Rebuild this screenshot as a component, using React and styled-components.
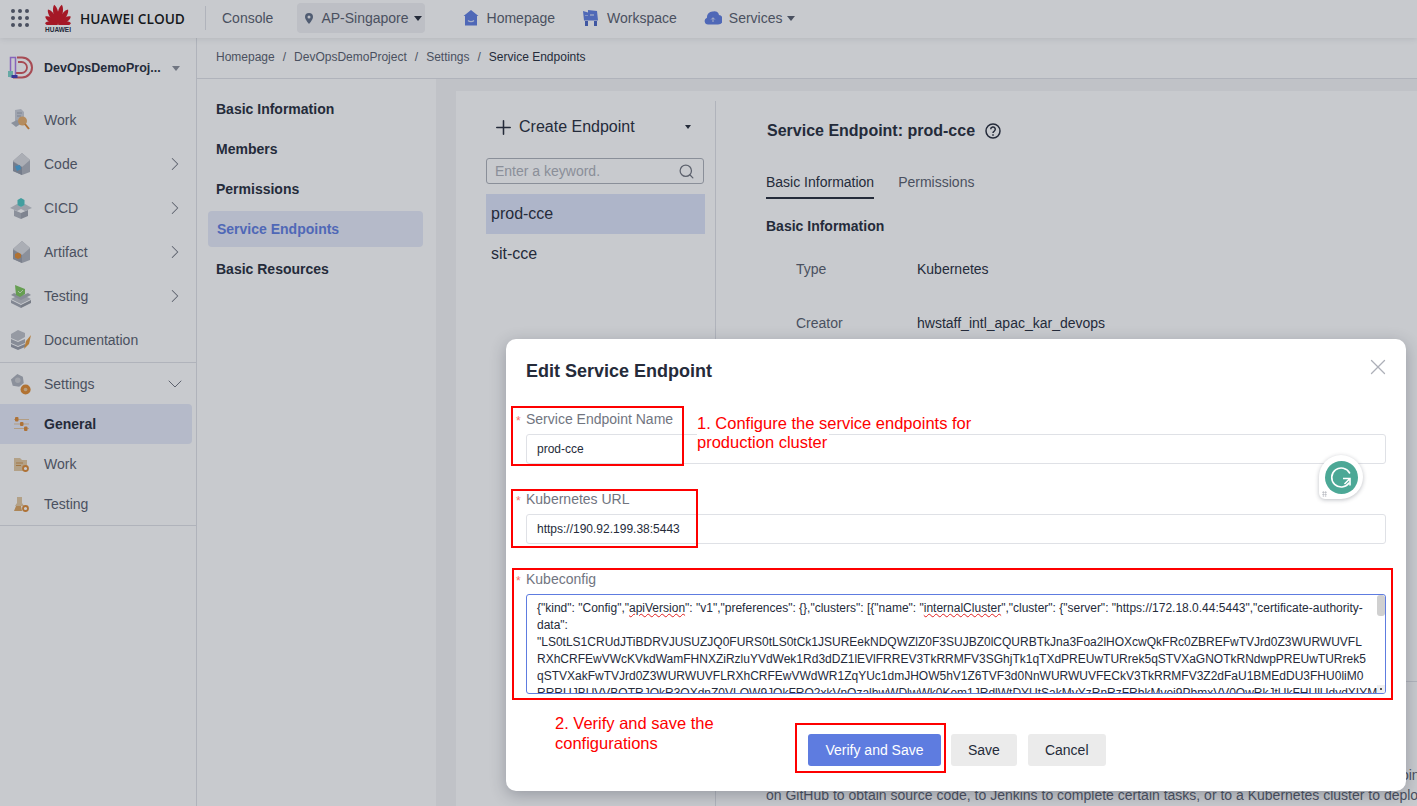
import React from "react";
import styled, { createGlobalStyle } from "styled-components";
import { ChevronRight, ChevronDown, Plus, Search, X } from "lucide-react";

const GlobalStyle = createGlobalStyle`
  html, body {
    margin: 0;
    padding: 0;
    height: 100%;
    overflow: hidden;
    font-family: "Liberation Sans", Arial, sans-serif;
    color: #252b3a;
    background: #ffffff;
  }
  * { box-sizing: border-box; }
`;

function HuaweiLogo() {
  const petals = [
    { a: -84, l: 13 },
    { a: -58, l: 15 },
    { a: -34, l: 18 },
    { a: -11, l: 20 },
    { a: 11, l: 20 },
    { a: 34, l: 18 },
    { a: 58, l: 15 },
    { a: 84, l: 13 },
  ];
  return (
    <svg width="28" height="21" viewBox="0 0 28 21">
      {petals.map((p) => (
        <path
          key={p.a}
          d={`M14 20.500 C10.500 ${20.5 - p.l * 0.45} 11 ${20.5 - p.l * 0.85} 14 ${20.5 - p.l} C17 ${20.5 - p.l * 0.85} 17.500 ${20.5 - p.l * 0.45} 14 20.500 Z`}
          fill="#d0121f"
          transform={`rotate(${p.a} 14 20.500)`}
        />
      ))}
    </svg>
  );
}

function ProjectLogo() {
  return (
    <svg width="26" height="24" viewBox="0 0 26 24" fill="none">
      <path d="M10 1.500h5a10 10 0 0 1 0 20H6" stroke="#d3565c" strokeWidth="2" />
      <path d="M11 6h3.500a5.500 5.500 0 0 1 0 11H9" stroke="#d3565c" strokeWidth="1.800" />
      <rect x="3.500" y="1.500" width="5" height="19" stroke="#a878e6" strokeWidth="1.500" />
      <rect x="1" y="15" width="5" height="6" fill="#7dd3c8" />
      <rect x="4.500" y="19" width="6" height="3" fill="#3e3bb5" />
    </svg>
  );
}

// sidebar pictograms, grey isometric parts with one coloured accent
function NavPicture({ kind }) {
  if (kind === "work") {
    return (
      <svg width="22" height="24" viewBox="0 0 22 24" fill="none">
        <path d="M5 2l6-1 3 3 0 10H5z" fill="#c9cdd6" />
        <path d="M7 5h5M7 8h4" stroke="#9aa0ad" />
        <path d="M1 15l6-3 5 3-6 4z" fill="#aeb3bd" />
        <circle cx="12.500" cy="13" r="4.500" fill="#e5ad6b" />
        <path d="M15 16l4 5" stroke="#dd8a35" strokeWidth="2" />
      </svg>
    );
  }
  if (kind === "code") {
    return (
      <svg width="22" height="24" viewBox="0 0 22 24">
        <path d="M12 1l8 7v12l-8 3-9-4V9z" fill="#aeb2bb" />
        <path d="M12 1L3 9l9 6 8-7z" fill="#d9dade" />
        <path d="M3 10l9 5v8l-9-4z" fill="#8f97a6" />
        <path d="M5 14l5-1 1 4-4 2z" fill="#4aa6dd" />
      </svg>
    );
  }
  if (kind === "cicd") {
    return (
      <svg width="22" height="24" viewBox="0 0 22 24">
        <path d="M0 12l7-4 4 3 4-3 7 4-7 3-4-2-4 2z" fill="#c4c7ce" />
        <path d="M4 14l7 3v6l-7-3z" fill="#aeb2bb" />
        <path d="M18 14l-7 3v6l7-3z" fill="#9ea2ac" />
        <path d="M7.500 4l3.500-2 3.500 2v5l-3.500 2-3.500-2z" fill="#4cc4c0" />
      </svg>
    );
  }
  if (kind === "artifact") {
    return (
      <svg width="22" height="24" viewBox="0 0 22 24">
        <path d="M12 1l8 7v12l-8 3-9-4V9z" fill="#aeb2bb" />
        <path d="M12 1L3 9l9 6 8-7z" fill="#d9dade" />
        <path d="M3 10l9 5v8l-9-4z" fill="#9a9ea9" />
        <path d="M5 14l3-1.500 3 1.500v3.500L8 19l-3-1.500z" fill="#e08a2f" />
      </svg>
    );
  }
  if (kind === "testing") {
    return (
      <svg width="22" height="24" viewBox="0 0 22 24">
        <path d="M1 15l10-5 10 5-10 5z" fill="#bcbfc6" />
        <path d="M1 16l10 5v3L1 19z" fill="#a2a6b0" />
        <path d="M21 16l-10 5v3l10-5z" fill="#93979f" />
        <path d="M1 11l10 5 10-5-3-2-7 3-7-3z" fill="#a9adb6" />
        <path d="M5 1l10 4v5l-5 3-4-2z" fill="#7cc55a" />
        <path d="M8 7l2 2 3-3" stroke="#d2ecc4" fill="none" />
      </svg>
    );
  }
  if (kind === "doc") {
    return (
      <svg width="22" height="24" viewBox="0 0 22 24">
        <path d="M1 6l7-4 7 3v4l-7 4-7-3z" fill="#bcbfc6" />
        <path d="M1 11l7 3 7-3v4l-7 3-7-3z" fill="#a9adb6" />
        <path d="M1 16l7 3 7-3v3l-7 3-7-3z" fill="#989ca8" />
        <path d="M14 21l2-8 5-6-2 9z" fill="#e59a3c" />
      </svg>
    );
  }
  return (
    <svg width="24" height="24" viewBox="0 0 24 24">
      <path d="M8 1l6 3 1 7-5 4-7-1-2-7z" fill="#aeb2bb" />
      <circle cx="8.500" cy="8" r="3" fill="#cbccd0" />
      <circle cx="17" cy="18" r="5.500" fill="#e08a2f" />
      <circle cx="17" cy="18" r="2" fill="#e9c393" />
    </svg>
  );
}

function SliderIcon() {
  return (
    <svg width="15" height="14" viewBox="0 0 15 14">
      <path d="M0 2.500h15M0 7h15M0 11.500h15" stroke="#e2c39b" strokeWidth="1" />
      <rect x="1" y="0" width="3.500" height="4.500" rx="1" fill="#dd8a35" />
      <rect x="6" y="5" width="3.500" height="4" rx="1" fill="#dd8a35" />
      <rect x="10" y="9.500" width="3.500" height="4.500" rx="1" fill="#dd8a35" />
    </svg>
  );
}

function FolderGearIcon() {
  return (
    <svg width="15" height="15" viewBox="0 0 15 15">
      <path d="M0 1h6l2 2h5v11H0z" fill="#e3c8a0" />
      <path d="M2 6h7M2 8.500h5" stroke="#cc9148" strokeWidth="1" />
      <circle cx="11.500" cy="11.500" r="2.500" fill="#fff" stroke="#dd8a35" strokeWidth="1.800" />
    </svg>
  );
}

function FlaskGearIcon() {
  return (
    <svg width="15" height="15" viewBox="0 0 15 15">
      <path d="M3 0h5v6l2 3H1l2-3z" fill="#e3c8a0" />
      <path d="M0 14l2-5h5l1 5z" fill="#dba561" />
      <circle cx="11.500" cy="11.500" r="2.500" fill="#fff" stroke="#dd8a35" strokeWidth="1.800" />
    </svg>
  );
}

function PinIcon() {
  return (
    <svg width="8" height="11" viewBox="0 0 8 11">
      <path fillRule="evenodd" d="M4 0a4 4 0 0 1 4 4c0 2.500-4 7-4 7S0 6.500 0 4a4 4 0 0 1 4-4zm0 2.500a1.500 1.500 0 1 0 0 3 1.500 1.500 0 0 0 0-3z" fill="#5f6d85" />
    </svg>
  );
}

function HomeIcon() {
  return (
    <svg width="18" height="18" viewBox="0 0 18 18">
      <path d="M9 1l7.500 6H15v9.500H3V7H1.500z" fill="#5e7ce0" />
      <path d="M6 11.500c1.500 1.500 4.500 1.500 6 0" stroke="#d6def7" strokeWidth="1.200" fill="none" />
    </svg>
  );
}

function WorkspaceIcon() {
  return (
    <svg width="18" height="18" viewBox="0 0 18 18">
      <path d="M1 2l5 1.500V1l9 1 1 9.500H2z" fill="#5e7ce0" />
      <path d="M3 12h3v5H3zM12 12h3v5h-3z" fill="#4a66c4" />
      <path d="M8 5h4v2H8zM3 6h3v1H3z" fill="#a6b7ee" />
    </svg>
  );
}

function CloudIcon() {
  return (
    <svg width="18" height="18" viewBox="0 0 18 18">
      <path d="M4 15.500a3.500 3.500 0 0 1-1-6.800A5.500 5.500 0 0 1 9 2.500a4.500 4.500 0 0 1 6 3.500 4.800 4.800 0 0 1-1 9.500z" fill="#5e7ce0" />
      <path d="M9 13V9M7.200 10.500L9 8.700l1.800 1.800" stroke="#d6def7" strokeWidth="1" fill="none" />
    </svg>
  );
}

function HelpIcon() {
  return (
    <svg width="16" height="16" viewBox="0 0 16 16" fill="none" stroke="#252b3a">
      <circle cx="8" cy="8" r="7" strokeWidth="1.500" />
      <path d="M5.700 6.300a2.300 2.300 0 1 1 3.400 2c-.8.500-1.100.8-1.100 1.700" strokeWidth="1.500" />
      <circle cx="8" cy="12" r="0.500" strokeWidth="1" />
    </svg>
  );
}

function GrammarlyIcon() {
  return (
    <svg width="33" height="33" viewBox="0 0 33 33" fill="none">
      <circle cx="16.500" cy="16.500" r="16.500" fill="#4ca896" />
      <path d="M24 22a9.500 9.500 0 1 1 .6-10" stroke="#fff" strokeWidth="1.600" strokeLinecap="round" />
      <path d="M18 17.500h7v7M25 17.500l-5.500 5.500" stroke="#fff" strokeWidth="1.600" />
    </svg>
  );
}

const navItems = [
  { label: "Work", kind: "work" },
  { label: "Code", kind: "code", arrow: true },
  { label: "CICD", kind: "cicd", arrow: true },
  { label: "Artifact", kind: "artifact", arrow: true },
  { label: "Testing", kind: "testing", arrow: true },
  { label: "Documentation", kind: "doc" },
];

const settingItems = [
  { label: "General", icon: <SliderIcon />, active: true },
  { label: "Work", icon: <FolderGearIcon /> },
  { label: "Testing", icon: <FlaskGearIcon /> },
];

const settingsMenu = ["Basic Information", "Members", "Permissions", "Service Endpoints", "Basic Resources"];

const kubeLines = [
  <>
    {'{"kind": "Config","'}
    <Typo>apiVersion</Typo>
    {'": "v1","preferences": {},"clusters": [{"name": "'}
    <Typo>internalCluster</Typo>
    {'","cluster": {"server": "https://172.18.0.44:5443","certificate-authority-'}
  </>,
  'data":',
  '"LS0tLS1CRUdJTiBDRVJUSUZJQ0FURS0tLS0tCk1JSUREekNDQWZlZ0F3SUJBZ0lCQURBTkJna3Foa2lHOXcwQkFRc0ZBREFwTVJrd0Z3WURWUVFL',
  "RXhCRFEwVWcKVkdWamFHNXZiRzluYVdWek1Rd3dDZ1lEVlFRREV3TkRRMFV3SGhjTk1qTXdPREUwTURrek5qSTVXaGNOTkRNdwpPREUwTURrek5",
  "qSTVXakFwTVJrd0Z3WURWUVFLRXhCRFEwVWdWR1ZqYUc1dmJHOW5hV1Z6TVF3d0NnWURWUVFECkV3TkRRMFV3Z2dFaU1BMEdDU3FHU0liM0",
  "RRRUJBUVVBQTRJQkR3QXdnZ0VLQW9JQkFRQ2xkVnQzalhwWDlwWk0Kem1JRdlWtDYUtSakMyYzRnRzFRbkMvei9PbmxVV0QwRkJtUkFHUlUdydXIYM",
];

export default function App() {
  return (
    <Page>
      <GlobalStyle />
      <TopBar>
        <Waffle>
          {Array.from({ length: 9 }).map((_, i) => (
            <i key={i} />
          ))}
        </Waffle>
        <Brand>
          <BrandMark>
            <HuaweiLogo />
            <span>HUAWEI</span>
          </BrandMark>
          <BrandName>HUAWEI CLOUD</BrandName>
        </Brand>
        <TopDivider />
        <TopLink>Console</TopLink>
        <RegionPicker>
          <PinIcon />
          AP-Singapore
          <Caret />
        </RegionPicker>
        <TopNav>
          <TopNavItem>
            <HomeIcon />
            Homepage
          </TopNavItem>
          <TopNavItem>
            <WorkspaceIcon />
            Workspace
          </TopNavItem>
          <TopNavItem>
            <CloudIcon />
            Services
            <Caret />
          </TopNavItem>
        </TopNav>
      </TopBar>

      <Body>
        <Sidebar>
          <ProjectRow>
            <ProjectLogo />
            <ProjectName>DevOpsDemoProj...</ProjectName>
            <Caret $grey />
          </ProjectRow>
          <NavGroup>
            {navItems.map((item) => (
              <NavItem key={item.label}>
                <NavIcon>
                  <NavPicture kind={item.kind} />
                </NavIcon>
                {item.label}
                {item.arrow && (
                  <NavArrow>
                    <ChevronRight size={22} strokeWidth={1.100} />
                  </NavArrow>
                )}
              </NavItem>
            ))}
          </NavGroup>
          <NavGroup $tail>
            <NavItem $short>
              <NavIcon>
                <NavPicture kind="settings" />
              </NavIcon>
              Settings
              <NavArrow>
                <ChevronDown size={24} strokeWidth={1} />
              </NavArrow>
            </NavItem>
            {settingItems.map((item) => (
              <SubItem key={item.label} $active={item.active}>
                <NavIcon>{item.icon}</NavIcon>
                {item.label}
              </SubItem>
            ))}
          </NavGroup>
        </Sidebar>

        <Main>
          <Breadcrumb>
            <span>Homepage</span>
            <Slash>/</Slash>
            <span>DevOpsDemoProject</span>
            <Slash>/</Slash>
            <span>Settings</span>
            <Slash>/</Slash>
            <strong>Service Endpoints</strong>
          </Breadcrumb>
          <Columns>
            <SettingsMenu>
              {settingsMenu.map((label) => (
                <SettingsItem key={label} $active={label === "Service Endpoints"}>
                  {label}
                </SettingsItem>
              ))}
            </SettingsMenu>
            <Workspace>
              <Card>
                <EndpointList>
                  <CreateButton>
                    <Plus size={23} strokeWidth={1.600} />
                    Create Endpoint
                    <Caret $small />
                  </CreateButton>
                  <SearchBox>
                    Enter a keyword.
                    <Search size={17} color="#71757f" strokeWidth={1.800} />
                  </SearchBox>
                  <EndpointItem $active>prod-cce</EndpointItem>
                  <EndpointItem>sit-cce</EndpointItem>
                </EndpointList>
                <Detail>
                  <DetailTitle>
                    Service Endpoint: prod-cce
                    <HelpIcon />
                  </DetailTitle>
                  <Tabs>
                    <Tab $active>Basic Information</Tab>
                    <Tab>Permissions</Tab>
                  </Tabs>
                  <SectionTitle>Basic Information</SectionTitle>
                  <InfoRow>
                    <InfoKey>Type</InfoKey>
                    <span>Kubernetes</span>
                  </InfoRow>
                  <InfoRow>
                    <InfoKey>Creator</InfoKey>
                    <span>hwstaff_intl_apac_kar_devops</span>
                  </InfoRow>
                  <DetailFoot>
                    <p>Service endpoints are extensions of CodeArts and connect to third-party services. With service endpoints, tasks can connect to CodeArts</p>
                    <p>on GitHub to obtain source code, to Jenkins to complete certain tasks, or to a Kubernetes cluster to deploy applications.</p>
                  </DetailFoot>
                </Detail>
              </Card>
            </Workspace>
          </Columns>
        </Main>
      </Body>

      <Mask />

      <Modal>
        <ModalTitle>Edit Service Endpoint</ModalTitle>
        <CloseIcon>
          <X size={26} strokeWidth={1.200} />
        </CloseIcon>
        <Field>
          <FieldLabel>Service Endpoint Name</FieldLabel>
          <Input>prod-cce</Input>
          <RedBox style={{ left: -15, top: -3, width: 173, height: 60 }} />
          <NoteOne>
            <span>1. Configure the service endpoints for</span>
            <span>production cluster</span>
          </NoteOne>
        </Field>
        <Field>
          <FieldLabel>Kubernetes URL</FieldLabel>
          <Input>https://190.92.199.38:5443</Input>
          <RedBox style={{ left: -15, top: 0, width: 187, height: 59 }} />
        </Field>
        <Field>
          <FieldLabel>Kubeconfig</FieldLabel>
          <CodeArea>
            {kubeLines.map((line, i) => (
              <div key={i}>{line}</div>
            ))}
            <ScrollThumb />
            <Resizer />
          </CodeArea>
          <RedBox style={{ left: -14, top: -1, width: 881, height: 132 }} />
        </Field>
        <Footer>
          <NoteTwo>
            <span>2. Verify and save the</span>
            <span>configurations</span>
          </NoteTwo>
          <PrimaryButton>Verify and Save</PrimaryButton>
          <GreyButton>Save</GreyButton>
          <GreyButton>Cancel</GreyButton>
          <RedBox style={{ left: 269, top: -11, width: 151, height: 50 }} />
        </Footer>
        <GrammarlyBadge>
          <GrammarlyIcon />
          <GripDots />
        </GrammarlyBadge>
      </Modal>
    </Page>
  );
}

function Typo({ children }) {
  return <TypoMark>{children}</TypoMark>;
}

const TypoMark = styled.span`
  text-decoration: underline wavy #e02020 1px;
  text-underline-offset: 1px;
`;

const Page = styled.div`
  position: relative;
  width: 1417px;
  height: 806px;
  overflow: hidden;
  font-size: 14px;
`;

const TopBar = styled.header`
  display: flex;
  align-items: center;
  height: 38px;
  padding: 0 0 2px 11px;
  background: #ffffff;
  box-shadow: 0 1px 6px rgba(37, 43, 58, 0.12);
  position: relative;
`;

const Waffle = styled.div`
  display: grid;
  grid-template-columns: repeat(3, 4px);
  gap: 3px;
  i {
    width: 4px;
    height: 4px;
    border-radius: 50%;
    background: #575d6c;
  }
`;

const Brand = styled.div`
  display: flex;
  align-items: center;
  margin-left: 15px;
`;

const BrandMark = styled.div`
  display: flex;
  flex-direction: column;
  align-items: center;
  width: 28px;
  svg { display: block; }
  span {
    font-size: 6.500px;
    line-height: 7px;
    font-weight: 700;
    color: #252b3a;
    margin-top: 1px;
    white-space: nowrap;
  }
`;

const BrandName = styled.div`
  width: 105px;
  margin-left: 8px;
  font-family: "Open Sans", sans-serif;
  font-size: 13.700px;
  font-weight: 600;
  color: #111111;
  white-space: nowrap;
`;

const TopDivider = styled.div`
  width: 1px;
  height: 24px;
  margin-left: 20px;
  background: #dfe1e6;
`;

const TopLink = styled.div`
  margin-left: 16px;
  color: #575d6c;
`;

const RegionPicker = styled.div`
  display: flex;
  align-items: center;
  gap: 5px;
  height: 30px;
  margin-left: 24px;
  padding: 0 3px 0 8px;
  border-radius: 4px;
  background: #f0f0f3;
  color: #575d6c;
  svg { margin-right: 3px; }
`;

const Caret = styled.span`
  display: inline-block;
  width: 0;
  height: 0;
  border-left: ${(p) => (p.$small ? 3 : 4)}px solid transparent;
  border-right: ${(p) => (p.$small ? 3 : 4)}px solid transparent;
  border-top: ${(p) => (p.$small ? 4 : 5)}px solid ${(p) => (p.$grey ? "#8a8e99" : "#252b3a")};
`;

const TopNav = styled.nav`
  display: flex;
  align-items: center;
  gap: 27px;
  margin-left: 37px;
`;

const TopNavItem = styled.div`
  display: flex;
  align-items: center;
  gap: 7px;
  color: #575d6c;
  & > span { margin-left: -3px; border-top-color: #575d6c; }
`;

const Body = styled.div`
  display: flex;
  height: 768px;
`;

const Sidebar = styled.aside`
  width: 197px;
  flex: none;
  border-right: 1px solid #dfe1e6;
  background: #ffffff;
`;

const ProjectRow = styled.div`
  display: flex;
  align-items: center;
  height: 60px;
  padding: 0 16px 0 7px;
  font-weight: 700;
  font-size: 12.500px;
  color: #252b3a;
`;

const ProjectName = styled.div`
  flex: 1;
  margin-left: 11px;
  white-space: nowrap;
`;

const NavGroup = styled.div`
  border-bottom: 1px solid #dfe1e6;
  padding-bottom: ${(p) => (p.$tail ? "1px" : "0")};
`;

const NavItem = styled.div`
  display: flex;
  align-items: center;
  height: ${(p) => (p.$short ? "41px" : "44px")};
  padding: 0 10px;
  color: #575d6c;
`;

const NavIcon = styled.div`
  display: flex;
  align-items: center;
  justify-content: center;
  width: 22px;
  margin-right: 12px;
`;

const NavArrow = styled.span`
  margin-left: auto;
  display: flex;
  justify-content: center;
  width: 22px;
  flex: none;
  color: #71757f;
  svg { flex: none; }
`;

const SubItem = styled.div`
  display: flex;
  align-items: center;
  height: 40px;
  width: 192px;
  padding-left: 10px;
  border-radius: 0 4px 4px 0;
  color: ${(p) => (p.$active ? "#252b3a" : "#575d6c")};
  font-weight: ${(p) => (p.$active ? 700 : 400)};
  background: ${(p) => (p.$active ? "#e6eaf8" : "transparent")};
`;

const Main = styled.main`
  flex: 1;
  min-width: 0;
  display: flex;
  flex-direction: column;
  background: #f5f5f6;
`;

const Breadcrumb = styled.div`
  display: flex;
  align-items: center;
  height: 41px;
  flex: none;
  padding: 0 0 2px 19px;
  font-size: 12px;
  color: #575d6c;
  background: #ffffff;
  border-bottom: 1px solid #dfe1e6;
  strong { font-weight: 400; color: #252b3a; }
`;

const Slash = styled.span`
  margin: 0 8px;
`;

const Columns = styled.div`
  flex: 1;
  display: flex;
  min-height: 0;
`;

const SettingsMenu = styled.div`
  width: 239px;
  flex: none;
  padding: 12px 13px 0 11px;
  background: #ffffff;
`;

const SettingsItem = styled.div`
  display: flex;
  align-items: center;
  height: 36px;
  margin-bottom: 4px;
  padding-left: ${(p) => (p.$active ? "9px" : "8px")};
  border-radius: 4px;
  font-weight: 700;
  color: ${(p) => (p.$active ? "#5e7ce0" : "#252b3a")};
  background: ${(p) => (p.$active ? "#e6eaf8" : "transparent")};
`;

const Workspace = styled.div`
  flex: 1;
  min-width: 0;
  padding: 12px 0 0 20px;
`;

const Card = styled.div`
  display: flex;
  height: 100%;
  padding-top: 10px;
  background: #ffffff;
`;

const EndpointList = styled.div`
  width: 260px;
  flex: none;
  padding: 8px 10px 0 30px;
  border-right: 1px solid #dfe1e6;
`;

const CreateButton = styled.div`
  display: flex;
  align-items: center;
  gap: 4px;
  height: 36px;
  padding: 0 14px 0 6px;
  margin-bottom: 13px;
  font-size: 16px;
  color: #252b3a;
  & > span { margin-left: auto; }
`;

const SearchBox = styled.div`
  display: flex;
  align-items: center;
  justify-content: space-between;
  height: 26px;
  padding: 0 8px;
  margin-right: 1px;
  border: 1px solid #adb0b8;
  border-radius: 3px;
  color: #adb0b8;
  margin-bottom: 10px;
`;

const EndpointItem = styled.div`
  display: flex;
  align-items: center;
  height: 40px;
  padding-left: 5px;
  font-size: 16px;
  color: #252b3a;
  background: ${(p) => (p.$active ? "#dde3f8" : "transparent")};
`;

const Detail = styled.div`
  flex: 1;
  min-width: 0;
  position: relative;
  padding: 0 0 0 50px;
`;

const DetailTitle = styled.div`
  display: flex;
  align-items: center;
  gap: 10px;
  height: 20px;
  margin: 20px 0 0 1px;
  font-size: 16px;
  font-weight: 700;
  color: #252b3a;
  white-space: nowrap;
`;

const Tabs = styled.div`
  display: flex;
  gap: 24px;
  margin-top: 31px;
`;

const Tab = styled.div`
  height: 27px;
  line-height: 20px;
  color: ${(p) => (p.$active ? "#252b3a" : "#575d6c")};
  border-bottom: ${(p) => (p.$active ? "2px solid #252b3a" : "0")};
`;

const SectionTitle = styled.div`
  margin: 17px 0 6px;
  line-height: 20px;
  font-weight: 700;
`;

const InfoRow = styled.div`
  display: flex;
  align-items: center;
  height: 54px;
  padding-left: 30px;
`;

const InfoKey = styled.span`
  width: 121px;
  color: #575d6c;
`;

const DetailFoot = styled.div`
  position: absolute;
  left: 0;
  top: 580px;
  width: 960px;
  padding: 84px 0 0 50px;
  border-top: 1px solid #dfe1e6;
  white-space: nowrap;
  color: #575d6c;
  p { margin: 0 0 2px; line-height: 18px; }
  p:first-child { text-indent: 14px; }
`;

const Mask = styled.div`
  position: absolute;
  inset: 0;
  background: rgba(37, 43, 58, 0.25);
`;

const Modal = styled.section`
  position: absolute;
  left: 506px;
  top: 339px;
  width: 900px;
  height: 452px;
  padding: 20px 20px 0;
  background: #ffffff;
  border-radius: 10px;
  box-shadow: 0 4px 16px rgba(37, 43, 58, 0.3);
`;

const ModalTitle = styled.h2`
  margin: 0 0 26px;
  font-size: 18px;
  line-height: 24px;
  font-weight: 700;
  color: #252b3a;
`;

const CloseIcon = styled.div`
  position: absolute;
  right: 15px;
  top: 15px;
  color: #adb0b8;
  display: flex;
`;

const Field = styled.div`
  position: relative;
  margin-bottom: 25px;
`;

const FieldLabel = styled.div`
  position: relative;
  height: 20px;
  line-height: 20px;
  margin-bottom: 5px;
  color: #71757f;
  &::before {
    content: "*";
    position: absolute;
    left: -10px;
    top: 2px;
    color: #f66f6a;
    font-size: 12px;
  }
`;

const Input = styled.div`
  display: flex;
  align-items: center;
  height: 30px;
  padding-left: 10px;
  border: 1px solid #dfe1e6;
  border-radius: 3px;
  font-size: 12px;
  color: #252b3a;
`;

const CodeArea = styled.div`
  position: relative;
  height: 100px;
  overflow: hidden;
  padding: 5px 10px;
  border: 1px solid #5e7ce0;
  border-radius: 3px;
  font-size: 12px;
  line-height: 17px;
  white-space: nowrap;
  color: #252b3a;
`;

const ScrollThumb = styled.div`
  position: absolute;
  right: 0;
  top: 0;
  width: 8px;
  height: 21px;
  border-radius: 3px;
  background: #d0d0d0;
`;

const Resizer = styled.div`
  position: absolute;
  right: 0;
  bottom: 0;
  width: 8px;
  height: 8px;
  background: #f0f0f0;
  &::after {
    content: "";
    position: absolute;
    left: 3px;
    top: 3px;
    width: 2px;
    height: 2px;
    background: #555555;
  }
`;

const RedBox = styled.div`
  position: absolute;
  border: 2px solid #fe0000;
  pointer-events: none;
`;

const NoteOne = styled.div`
  position: absolute;
  left: 171px;
  top: 5px;
  display: flex;
  flex-direction: column;
  align-items: flex-start;
  font-size: 16.500px;
  line-height: 19px;
  color: #fe0000;
  span { background: #ffffff; padding-right: 2px; }
`;

const NoteTwo = styled.div`
  position: absolute;
  left: 29px;
  top: -21px;
  display: flex;
  flex-direction: column;
  font-size: 16.500px;
  line-height: 20px;
  color: #fe0000;
`;

const Footer = styled.div`
  position: relative;
  display: flex;
  justify-content: flex-start;
  gap: 10px;
  margin-top: 40px;
  padding-left: 282px;
`;

const PrimaryButton = styled.div`
  display: flex;
  align-items: center;
  justify-content: center;
  width: 133px;
  height: 32px;
  border-radius: 3px;
  background: #5e7ce0;
  color: #ffffff;
`;

const GreyButton = styled.div`
  display: flex;
  align-items: center;
  justify-content: center;
  padding: 0 17px;
  height: 32px;
  border-radius: 3px;
  background: #ebebeb;
  color: #252b3a;
  & + & { margin-left: 1px; }
`;

const GrammarlyBadge = styled.div`
  position: absolute;
  left: 813px;
  top: 116px;
  display: flex;
  align-items: center;
  justify-content: center;
  width: 44px;
  height: 44px;
  border-radius: 50% 50% 50% 6px;
  background: #ffffff;
  box-shadow: 0 1px 4px rgba(37, 43, 58, 0.3);
`;

const GripDots = styled.span`
  position: absolute;
  left: 3px;
  bottom: 2px;
  width: 5px;
  height: 6px;
  background-image: radial-gradient(#adb0b8 0.8px, transparent 0.9px);
  background-size: 2.500px 2.500px;
`;
